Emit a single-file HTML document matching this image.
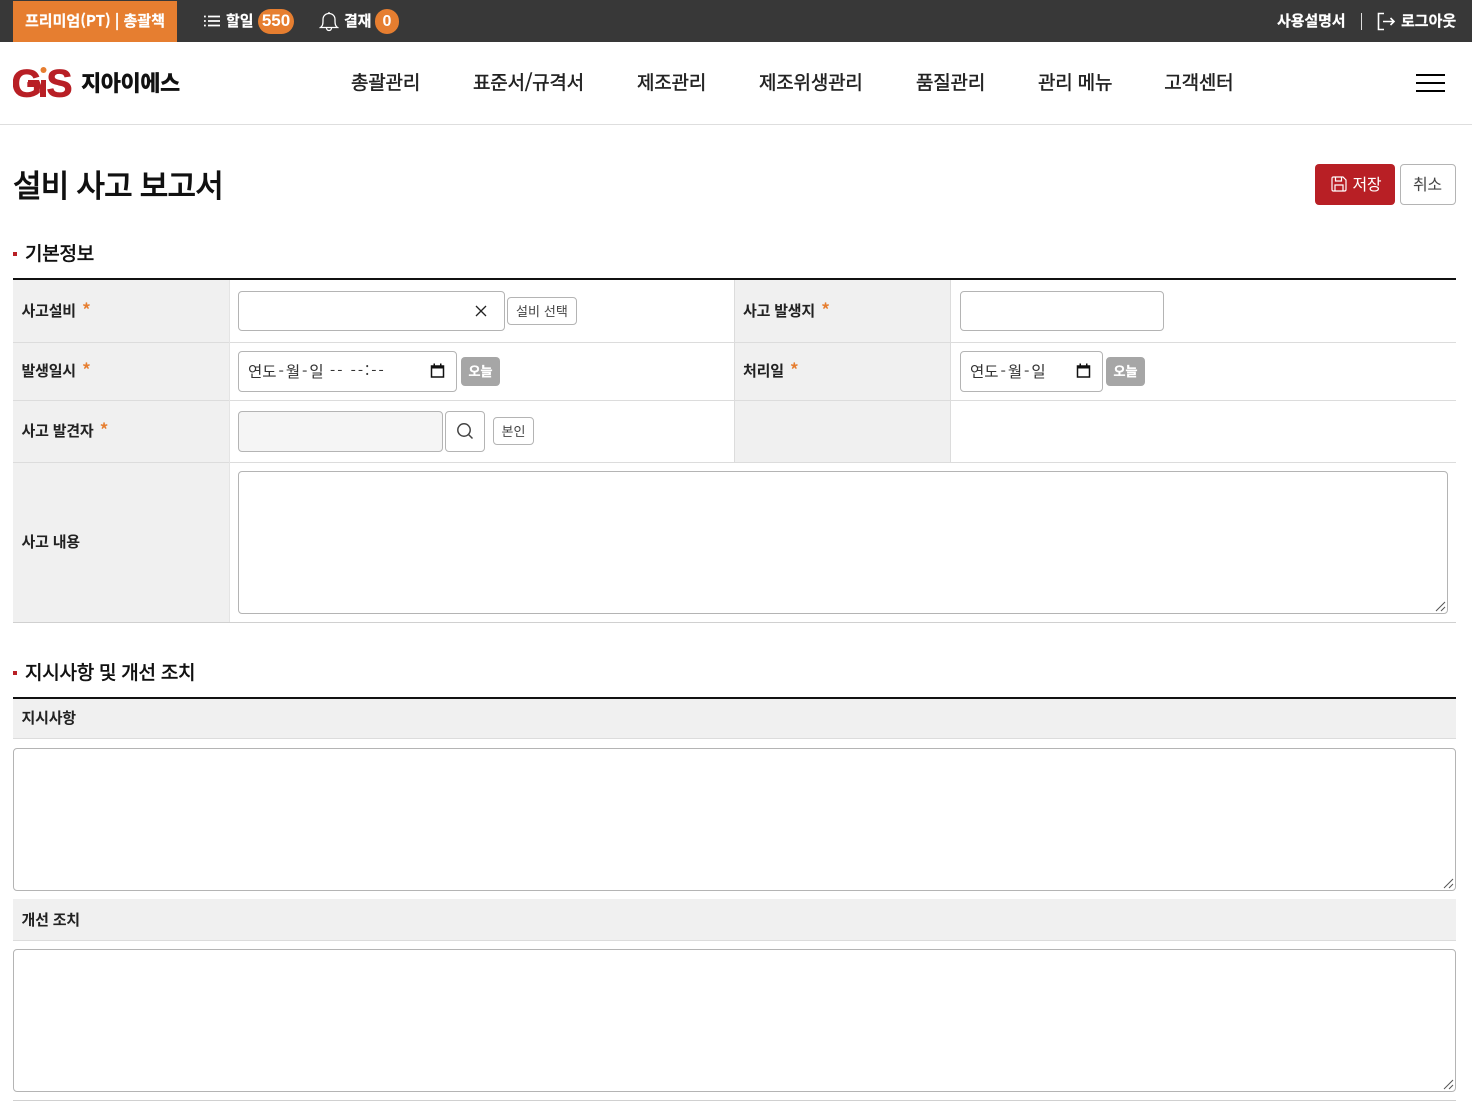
<!DOCTYPE html>
<html lang="ko"><head><meta charset="utf-8"><title>설비 사고 보고서</title>
<style>
*{box-sizing:border-box}
html,body{margin:0;padding:0;background:#fff}
body{width:1472px;height:1117px;position:relative;overflow:hidden;font-family:"Liberation Sans","Noto Sans CJK KR",sans-serif;color:#222}
.a,.t{position:absolute}
.t{white-space:nowrap;line-height:20px;font-family:"Noto Sans CJK KR","Liberation Sans",sans-serif}
.nav{font-size:19px;top:71.500px;color:#222;letter-spacing:-.2px;-webkit-text-stroke:.45px #222}
.top{font-size:15px;font-weight:700;color:#fff;letter-spacing:0;-webkit-text-stroke:.2px #fff}
.lb{font-size:15px;font-weight:700;letter-spacing:-.2px;color:#222}
.lb i{font-style:normal;color:#e67e30;margin-left:6.200px;font-weight:700;font-size:17px;line-height:0}
.box{position:absolute;background:#fff;border:1px solid #b4b4b4;border-radius:4px}
.g{position:absolute;background:#f0f0f0}
.h{position:absolute;height:1px;background:#dcdcdc}
.v{position:absolute;width:1px;background:#dcdcdc}
.sm{position:absolute;background:#fff;border:1px solid #b4b4b4;border-radius:4px;font-size:13px;color:#444;text-align:center;line-height:25px;height:28px;font-family:"Noto Sans CJK KR",sans-serif}
.today{position:absolute;background:#a6a6a6;color:#fff;border-radius:4px;width:39px;height:29px;top:357px;text-align:center;font-size:13px;font-weight:700;line-height:28px;font-family:"Noto Sans CJK KR",sans-serif;-webkit-text-stroke:.3px #fff}
.dt{font-size:15.500px;color:#333}
.dt b{font-weight:400;margin:0 1.950px}
.sec{font-size:19px;font-weight:400;line-height:24px;letter-spacing:-.25px;color:#111;-webkit-text-stroke:.6px #111}
.grip{position:absolute;width:11px;height:11px}
</style></head><body>
<div class="a" style="left:0;top:0;width:1472px;height:42px;background:#383838"></div>
<div class="a" style="left:13px;top:1px;width:164px;height:41px;background:#e67e30"></div>
<div class="t top" style="left:25px;top:11px">프리미엄(PT) | 총괄책</div>
<svg class="a" style="left:203px;top:14px" width="18" height="14" viewBox="0 0 18 14" fill="none" stroke="#fff" stroke-width="1.700"><path d="M5 2.500H17M5 7H17M5 11.500H17"/><path d="M1 2.500H2.800M1 7H2.800M1 11.500H2.800"/></svg>
<div class="t top" style="left:226px;top:11px">할일</div>
<div class="a" style="left:258px;top:9px;width:36px;height:25px;border-radius:13px;background:#e67e30;color:#fff;font:700 17px/24px 'Liberation Sans',sans-serif;text-align:center">550</div>
<svg class="a" style="left:319px;top:11px" width="20" height="21" viewBox="0 0 20 21" fill="none" stroke="#fff" stroke-width="1.300"><path d="M1.500 16.500C3.500 15 4 13.500 4 10V8.500C4 5 6.500 2.500 10 2.500S16 5 16 8.500V10C16 13.500 16.500 15 18.500 16.500Z"/><path d="M7.500 17A2.500 2.500 0 0 0 12.500 17M10 1V2.500"/></svg>
<div class="t top" style="left:344px;top:11px;letter-spacing:-.2px">결재</div>
<div class="a" style="left:375px;top:9px;width:24px;height:25px;border-radius:13px;background:#e67e30;color:#fff;font:700 16px/25px 'Liberation Sans',sans-serif;text-align:center">0</div>
<div class="t top" style="left:1277px;top:11px;letter-spacing:-.1px">사용설명서</div>
<div class="a" style="left:1361px;top:13px;width:1px;height:17px;background:#ddd"></div>
<svg class="a" style="left:1377px;top:12px" width="19" height="19" viewBox="0 0 19 19" fill="none" stroke="#fff" stroke-width="1.600"><path d="M7 1.500H1.500V17.500H7"/><path d="M6 9.500H17M13.500 6L17 9.500L13.500 13"/></svg>
<div class="t top" style="left:1401px;top:11px">로그아웃</div>

<svg class="a" style="left:13px;top:64px" width="62" height="36" viewBox="0 0 62 36"><text x="-1.500" y="32.500" font-family="Liberation Sans" font-weight="700" font-size="39" fill="#b81f25" stroke="#b81f25" stroke-width=".8">G</text><path d="M27 18L33 24V33H27Z" fill="#fff"/><path d="M15 16H26L28 21V16H33V33H27V25L24 21.500H15Z" fill="#b81f25"/><circle cx="30.500" cy="6" r="3" fill="#e67e30"/><text x="33.500" y="32.500" font-family="Liberation Sans" font-weight="700" font-size="39" fill="#b81f25" stroke="#b81f25" stroke-width=".8" textLength="26" lengthAdjust="spacingAndGlyphs">S</text></svg>
<div class="t" style="left:81px;top:71px;font-size:22px;font-weight:900;color:#111;letter-spacing:-.5px;line-height:22px">지아이에스</div>

<div class="t nav" style="left:351px">총괄관리</div>
<div class="t nav" style="left:473px">표준서/규격서</div>
<div class="t nav" style="left:637px">제조관리</div>
<div class="t nav" style="left:759px">제조위생관리</div>
<div class="t nav" style="left:916px">품질관리</div>
<div class="t nav" style="left:1038px">관리 메뉴</div>
<div class="t nav" style="left:1164.300px">고객센터</div>
<div class="a" style="left:1416px;top:74px;width:29px;height:2px;background:#000"></div>
<div class="a" style="left:1416px;top:82px;width:29px;height:2px;background:#000"></div>
<div class="a" style="left:1416px;top:90px;width:29px;height:2px;background:#000"></div>
<div class="a" style="left:0;top:124px;width:1472px;height:1px;background:#dedede"></div>

<div class="t" style="left:13px;top:164px;font-size:31px;font-weight:400;line-height:40px;color:#111;letter-spacing:-.78px;-webkit-text-stroke:1px #111">설비 사고 보고서</div>
<div class="a" style="left:1315px;top:164px;width:80px;height:41px;border-radius:4px;background:#b81f25"></div>
<svg class="a" style="left:1331px;top:176px" width="16" height="16" viewBox="0 0 16 16" fill="none" stroke="#fff" stroke-width="1.200"><path d="M1 2.500Q1 1 2.500 1H12L15 4V13.500Q15 15 13.500 15H2.500Q1 15 1 13.500Z"/><path d="M4.500 1V5H10.500V1M4 15V9H12V15"/></svg>
<div class="t" style="left:1352.500px;top:173px;font-size:16px;color:#fff;letter-spacing:-.4px">저장</div>
<div class="box" style="left:1400px;top:164px;width:56px;height:41px"></div>
<div class="t" style="left:1413px;top:173px;font-size:16px;color:#444;letter-spacing:-.4px">취소</div>

<div class="a" style="left:13px;top:252px;width:4px;height:4px;background:#b81f25"></div>
<div class="t sec" style="left:25px;top:241px">기본정보</div>
<div class="a" style="left:13px;top:278px;width:1443px;height:2px;background:#111"></div>

<div class="g" style="left:13px;top:280px;width:217px;height:342px"></div>
<div class="g" style="left:735px;top:280px;width:215px;height:182px"></div>
<div class="h" style="left:13px;top:342px;width:1443px"></div>
<div class="h" style="left:13px;top:400px;width:1443px"></div>
<div class="h" style="left:13px;top:462px;width:1443px"></div>
<div class="h" style="left:13px;top:622px;width:1443px;background:#d0d0d0"></div>
<div class="v" style="left:229px;top:280px;height:342px;background:#e4e4e4"></div>
<div class="v" style="left:734px;top:280px;height:182px"></div>
<div class="v" style="left:950px;top:280px;height:182px"></div>

<div class="t lb" style="left:21.500px;top:301px">사고설비<i>*</i></div>
<div class="t lb" style="left:21.500px;top:361px">발생일시<i>*</i></div>
<div class="t lb" style="left:21.500px;top:421px">사고 발견자<i>*</i></div>
<div class="t lb" style="left:21.500px;top:532px">사고 내용</div>
<div class="t lb" style="left:743px;top:301px">사고 발생지<i>*</i></div>
<div class="t lb" style="left:743px;top:361px">처리일<i>*</i></div>

<div class="box" style="left:238px;top:291px;width:267px;height:40px"></div>
<svg class="a" style="left:475px;top:305px" width="12" height="12" viewBox="0 0 12 12" stroke="#222" stroke-width="1.300"><path d="M1 1L11 11M11 1L1 11"/></svg>
<div class="sm" style="left:507px;top:297px;width:70px;letter-spacing:.1px">설비 선택</div>
<div class="box" style="left:960px;top:291px;width:204px;height:40px"></div>

<div class="box" style="left:238px;top:351px;width:219px;height:41px"></div>
<div class="t dt" style="left:248px;top:361px">연도<b>-</b>월<b>-</b>일</div>
<div class="t" style="left:330px;top:361px;font-size:15px;color:#333;letter-spacing:2px">-- --:--</div>
<svg class="a" style="left:430px;top:363px" width="15" height="15" viewBox="0 0 15 15" fill="none"><path d="M1.500 3H13.500V14H1.500Z" stroke="#111" stroke-width="1.500"/><rect x="1" y="2.500" width="13" height="3" fill="#111"/><rect x="3.500" y="0.500" width="1.500" height="2" fill="#111"/><rect x="10" y="0.500" width="1.500" height="2" fill="#111"/></svg>
<div class="today" style="left:461px">오늘</div>
<div class="box" style="left:960px;top:351px;width:143px;height:41px"></div>
<div class="t dt" style="left:970px;top:361px">연도<b>-</b>월<b>-</b>일</div>
<svg class="a" style="left:1076px;top:363px" width="15" height="15" viewBox="0 0 15 15" fill="none"><path d="M1.500 3H13.500V14H1.500Z" stroke="#111" stroke-width="1.500"/><rect x="1" y="2.500" width="13" height="3" fill="#111"/><rect x="3.500" y="0.500" width="1.500" height="2" fill="#111"/><rect x="10" y="0.500" width="1.500" height="2" fill="#111"/></svg>
<div class="today" style="left:1106px">오늘</div>

<div class="box" style="left:238px;top:411px;width:205px;height:41px;background:#f5f5f5"></div>
<div class="box" style="left:445px;top:411px;width:40px;height:41px"></div>
<svg class="a" style="left:456px;top:422px" width="18" height="18" viewBox="0 0 18 18" fill="none" stroke="#444" stroke-width="1.500"><circle cx="8" cy="8" r="6.200"/><path d="M12.500 12.500L16.500 16.500"/></svg>
<div class="sm" style="left:493px;top:417px;width:41px;line-height:26px">본인</div>

<div class="box" style="left:238px;top:471px;width:1210px;height:143px"></div>
<svg class="grip" style="left:1435px;top:601px" viewBox="0 0 11 11" stroke="#555" stroke-width="1"><path d="M1 10L10 1M6 10L10 6"/></svg>

<div class="a" style="left:13px;top:671px;width:4px;height:4px;background:#b81f25"></div>
<div class="t sec" style="left:25px;top:660px">지시사항 및 개선 조치</div>
<div class="a" style="left:13px;top:697px;width:1443px;height:2px;background:#111"></div>
<div class="g" style="left:13px;top:699px;width:1443px;height:39px"></div>
<div class="h" style="left:13px;top:738px;width:1443px"></div>
<div class="t lb" style="left:21.500px;top:708px">지시사항</div>
<div class="box" style="left:13px;top:748px;width:1443px;height:143px"></div>
<svg class="grip" style="left:1443px;top:878px" viewBox="0 0 11 11" stroke="#555" stroke-width="1"><path d="M1 10L10 1M6 10L10 6"/></svg>
<div class="g" style="left:13px;top:899px;width:1443px;height:41px"></div>
<div class="h" style="left:13px;top:940px;width:1443px"></div>
<div class="t lb" style="left:21.500px;top:910px">개선 조치</div>
<div class="box" style="left:13px;top:949px;width:1443px;height:143px"></div>
<svg class="grip" style="left:1443px;top:1079px" viewBox="0 0 11 11" stroke="#555" stroke-width="1"><path d="M1 10L10 1M6 10L10 6"/></svg>
<div class="h" style="left:13px;top:1100px;width:1443px;background:#d0d0d0"></div>
</body></html>
